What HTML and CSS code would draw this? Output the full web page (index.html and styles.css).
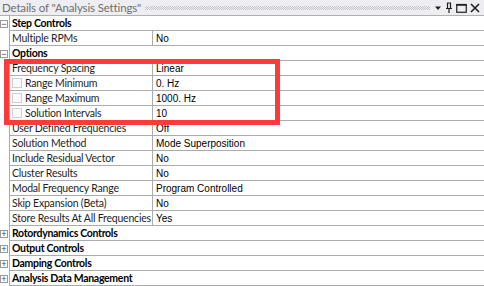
FILE: index.html
```html
<!DOCTYPE html>
<html lang="en">
<head>
    <meta charset="UTF-8">
    <title>Details of "Analysis Settings"</title>
    <link rel="stylesheet" href="styles.css">
</head>
<body>

    <div class="panel">
        <!-- Title bar -->
        <div class="titlebar">
            <span class="title">Details of "Analysis Settings"</span>
            <span class="grip"></span>
            <span class="tools">
                <svg width="8" height="6" viewBox="0 0 8 6"><path d="M1 1.5h6L4 5z" fill="#1e1e1e"/></svg>
                <svg width="8" height="11" viewBox="0 0 8 11"><path d="M2 1h4M2.5 1v5M5.5 1v5M1 6.5h6M4 7v4" stroke="#1e1e1e" stroke-width="1.2" fill="none"/></svg>
                <svg width="11" height="10" viewBox="0 0 11 10"><rect x="0.75" y="1.5" width="9.5" height="7.75" stroke="#1e1e1e" stroke-width="1.2" fill="none"/><path d="M0.5 2h10" stroke="#1e1e1e" stroke-width="1.5"/></svg>
                <svg width="10" height="10" viewBox="0 0 10 10"><path d="M1 1l8 8M9 1l-8 8" stroke="#1e1e1e" stroke-width="1.6"/></svg>
            </span>
        </div>

        <!-- Property grid -->
        <div class="grid">
            <div class="row"><span class="gutter"><span class="toggle">&minus;</span></span><div class="head">Step Controls</div></div>
            <div class="row"><span class="gutter"></span><div class="name">Multiple RPMs</div><div class="value">No</div></div>

            <div class="row"><span class="gutter"><span class="toggle">&minus;</span></span><div class="head">Options</div></div>
            <div class="row"><span class="gutter"></span><div class="name">Frequency Spacing</div><div class="value">Linear</div></div>
            <div class="row"><span class="gutter"></span><div class="name"><span class="check"></span>Range Minimum</div><div class="value">0. Hz</div></div>
            <div class="row"><span class="gutter"></span><div class="name"><span class="check"></span>Range Maximum</div><div class="value">1000. Hz</div></div>
            <div class="row"><span class="gutter"></span><div class="name"><span class="check"></span>Solution Intervals</div><div class="value">10</div></div>
            <div class="row"><span class="gutter"></span><div class="name">User Defined Frequencies</div><div class="value">Off</div></div>
            <div class="row"><span class="gutter"></span><div class="name">Solution Method</div><div class="value">Mode Superposition</div></div>
            <div class="row"><span class="gutter"></span><div class="name">Include Residual Vector</div><div class="value">No</div></div>
            <div class="row"><span class="gutter"></span><div class="name">Cluster Results</div><div class="value">No</div></div>
            <div class="row"><span class="gutter"></span><div class="name">Modal Frequency Range</div><div class="value">Program Controlled</div></div>
            <div class="row"><span class="gutter"></span><div class="name">Skip Expansion (Beta)</div><div class="value">No</div></div>
            <div class="row"><span class="gutter"></span><div class="name">Store Results At All Frequencies</div><div class="value">Yes</div></div>

            <div class="row"><span class="gutter"><span class="toggle">+</span></span><div class="head">Rotordynamics Controls</div></div>
            <div class="row"><span class="gutter"><span class="toggle">+</span></span><div class="head">Output Controls</div></div>
            <div class="row"><span class="gutter"><span class="toggle">+</span></span><div class="head">Damping Controls</div></div>
            <div class="row"><span class="gutter"><span class="toggle">+</span></span><div class="head">Analysis Data Management</div></div>
        </div>

        <!-- Annotation -->
        <div class="highlight"></div>
    </div>

</body>
</html>
```

FILE: styles.css
```css
/* General reset */
* {
    margin: 0;
    padding: 0;
    box-sizing: border-box;
}

body {
    background-color: #ffffff;
    font-family: Lato, "Liberation Sans", sans-serif;
    font-size: 10.5px;
    letter-spacing: -0.2px;
    color: #1e1e1e;
}

.panel {
    position: relative;
    width: 484px;
    height: 286px;
    overflow: hidden;
}

/* Title bar */
.titlebar {
    display: flex;
    align-items: center;
    height: 16px;
    padding-left: 2px;
    background-color: #eeeef2;
    border-bottom: 1px solid #b0b0b0;
}

.titlebar .title {
    font-size: 11.5px;
    letter-spacing: -0.15px;
    color: #6f6f6f;
    white-space: nowrap;
}

.titlebar .grip {
    flex: 1;
    height: 4px;
    margin: 0 4px 0 4px;
    background: repeating-conic-gradient(#c6c6ca 0 25%, transparent 0 50%) 0 0 / 2px 2px;
}

.titlebar .tools {
    display: flex;
    align-items: center;
    gap: 3px;
    padding-right: 4px;
}

.titlebar svg {
    display: block;
}

/* Property grid */
.row {
    display: flex;
    height: 15px;
}

.gutter {
    width: 10px;
    border-right: 1px solid #acacac;
    display: flex;
    align-items: center;
}

.toggle {
    width: 8px;
    height: 8px;
    border: 1px solid #9a9a9a;
    background-color: #fff;
    font-family: "Liberation Sans", sans-serif;
    font-size: 9px;
    letter-spacing: 0;
    line-height: 6px;
    text-align: center;
    color: #444;
}

.head,
.name,
.value {
    display: flex;
    align-items: center;
    border-bottom: 1px solid #acacac;
    white-space: nowrap;
}

.head {
    flex: 1;
    padding-left: 2px;
    font-weight: bold;
    letter-spacing: -0.3px;
    color: #000;
}

.name {
    width: 143px;
    padding-left: 2px;
    border-right: 1px solid #acacac;
}

.value {
    flex: 1;
    padding-left: 3px;
    font-family: "Liberation Sans", sans-serif;
    font-size: 10px;
    letter-spacing: 0;
    color: #000;
}

.check {
    width: 10px;
    height: 10px;
    margin-right: 3px;
    border: 1px solid #cfcfcf;
    background-color: #fbfbfb;
}

/* Red annotation box */
.highlight {
    position: absolute;
    left: 4px;
    top: 59px;
    width: 276px;
    height: 66px;
    border: 5px solid #ff3a3a;
}
```
